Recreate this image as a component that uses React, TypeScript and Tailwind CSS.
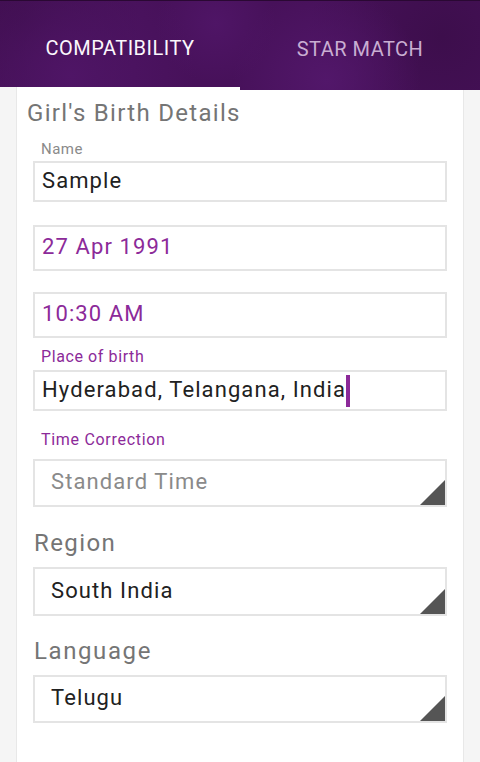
import React from "react";

function Triangle() {
  return (
    <svg className="absolute right-0 bottom-0" width="25" height="25" viewBox="0 0 25 25">
      <polygon points="25,0 25,25 0,25" fill="#555555" />
    </svg>
  );
}

function Box({
  h,
  children,
  select,
  className = "",
}: {
  h: string;
  children: React.ReactNode;
  select?: boolean;
  className?: string;
}) {
  return (
    <div
      className={`relative flex items-center border-2 border-[#e4e4e4] bg-white pb-[3px] ${h} ${
        select ? "pl-[16px]" : "pl-[7px]"
      } ${className}`}
    >
      {children}
      {select && <Triangle />}
    </div>
  );
}

export default function App() {
  return (
    <div
      className="w-[480px] h-[762px] overflow-hidden bg-[#f5f5f5]"
      style={{ fontFamily: "Roboto, 'Noto Sans', sans-serif" }}
    >
      {/* Header */}
      <div className="relative h-[90px] border-t border-[#2a0833] bg-[#47115a] bg-[radial-gradient(circle_at_15%_85%,#4f1566_0,transparent_30%),radial-gradient(circle_at_45%_25%,#4f1566_0,transparent_22%),radial-gradient(circle_at_68%_90%,#52176a_0,transparent_28%),radial-gradient(circle_at_92%_40%,#3d0e4c_0,transparent_30%),radial-gradient(circle_at_5%_20%,#3d0e4c_0,transparent_25%)]">
        <div className="flex h-[89px]">
          <div className="flex w-[240px] h-[86px] items-center justify-center pt-[8px] text-[20px] tracking-[0.5px] text-[#fbf7fc]">
            COMPATIBILITY
          </div>
          <div className="flex w-[240px] h-[89px] items-center justify-center pb-[2px] pt-[8px] text-[20px] tracking-[0.5px] text-[#c9aed2]">
            STAR MATCH
          </div>
        </div>
        <div className="absolute left-0 bottom-0 flex w-[240px] h-[3px]">
          <div className="w-[16px] bg-[#f5f5f5]" />
          <div className="flex-1 bg-white border-l border-[#e8e8e8]" />
        </div>
      </div>

      {/* Card */}
      <div className="ml-[16px] w-[448px] h-[672px] border-x border-[#e8e8e8] bg-white pt-[9px] px-[16px]">
        <div className="-ml-[6px] text-[24px] leading-[28px] tracking-[1.3px] text-[#757575]">
          Girl's Birth Details
        </div>

        <div className="mt-[13px] pl-[8px] text-[15px] leading-[18px] tracking-[0.5px] text-[#8a8a8a]">Name</div>
        <Box h="h-[41px]" className="mt-[3px]">
          <span className="text-[22px] tracking-[1.1px] text-[#212121]">Sample</span>
        </Box>

        <Box h="h-[46px]" className="mt-[23px]">
          <span className="text-[22px] tracking-[1.1px] text-[#8c2a99]">27 Apr 1991</span>
        </Box>

        <Box h="h-[46px]" className="mt-[21px]">
          <span className="text-[22px] tracking-[1.1px] text-[#8c2a99]">10:30 AM</span>
        </Box>

        <div className="mt-[10px] pl-[8px] text-[16px] leading-[18px] tracking-[0.6px] text-[#8c2a99]">Place of birth</div>
        <Box h="h-[41px]" className="mt-[4px]">
          <span className="text-[22px] tracking-[1.1px] text-[#212121]">Hyderabad, Telangana, India</span>
          <span className="mt-[4px] inline-block w-[4px] h-[32px] bg-[#8c2a99]" />
        </Box>

        <div className="mt-[20px] pl-[8px] text-[16px] leading-[18px] tracking-[0.7px] text-[#8c2a99]">Time Correction</div>
        <Box h="h-[48px]" select className="mt-[10px]">
          <span className="text-[22px] tracking-[1.1px] text-[#8a8a8a]">Standard Time</span>
        </Box>

        <div className="mt-[22px] pl-[1px] text-[24px] leading-[28px] tracking-[1.4px] text-[#757575]">Region</div>
        <Box h="h-[49px]" select className="mt-[10px]">
          <span className="text-[22px] tracking-[1.1px] text-[#212121]">South India</span>
        </Box>

        <div className="mt-[21px] pl-[1px] text-[24px] leading-[28px] tracking-[1.6px] text-[#757575]">Language</div>
        <Box h="h-[48px]" select className="mt-[10px]">
          <span className="text-[22px] tracking-[1.1px] text-[#212121]">Telugu</span>
        </Box>
      </div>
    </div>
  );
}
